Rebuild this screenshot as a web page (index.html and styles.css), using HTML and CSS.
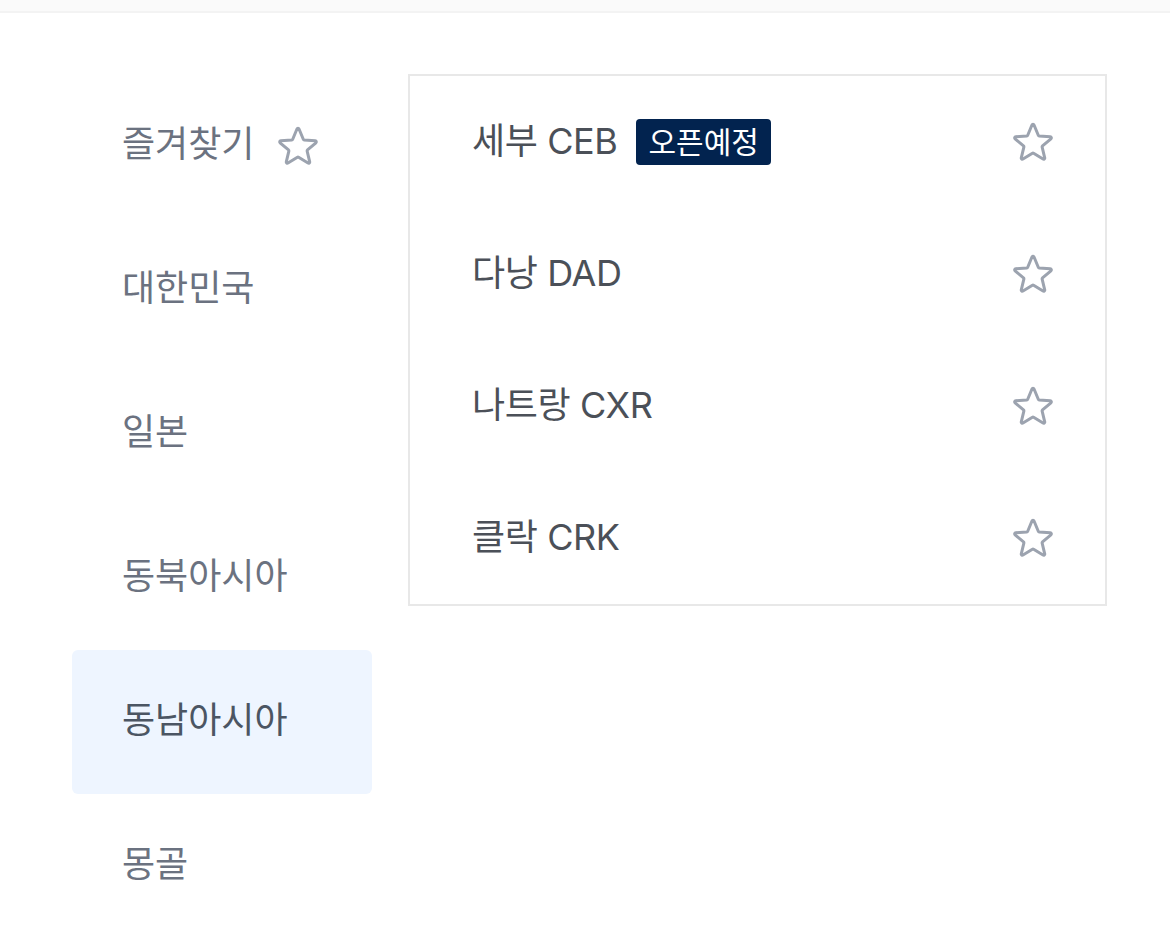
FILE: index.html
```html
<!DOCTYPE html>
<html lang="ko">
<head>
<meta charset="utf-8">
<link rel="stylesheet" href="styles.css">
</head>
<body>
<div class="topbar"></div>
<div class="content">
  <ul class="sidebar">
    <li class="side-item">즐겨찾기
      <svg class="star side-star" viewBox="0 0 24 24"><path d="M11.48 3.499a.562.562 0 011.04 0l2.125 5.111a.563.563 0 00.475.345l5.518.442c.499.04.701.663.321.988l-4.204 3.602a.563.563 0 00-.182.557l1.285 5.385a.562.562 0 01-.84.61l-4.725-2.885a.563.563 0 00-.586 0L6.982 20.54a.562.562 0 01-.84-.61l1.285-5.386a.562.562 0 00-.182-.557l-4.204-3.602a.563.563 0 01.321-.988l5.518-.442a.563.563 0 00.475-.345L11.48 3.5z"/></svg>
    </li>
    <li class="side-item">대한민국</li>
    <li class="side-item">일본</li>
    <li class="side-item">동북아시아</li>
    <li class="side-item active">동남아시아</li>
    <li class="side-item">몽골</li>
  </ul>
  <ul class="panel">
    <li class="row"><span class="name">세부 CEB</span><span class="badge">오픈예정</span>
      <svg class="star row-star" viewBox="0 0 24 24"><path d="M11.48 3.499a.562.562 0 011.04 0l2.125 5.111a.563.563 0 00.475.345l5.518.442c.499.04.701.663.321.988l-4.204 3.602a.563.563 0 00-.182.557l1.285 5.385a.562.562 0 01-.84.61l-4.725-2.885a.563.563 0 00-.586 0L6.982 20.54a.562.562 0 01-.84-.61l1.285-5.386a.562.562 0 00-.182-.557l-4.204-3.602a.563.563 0 01.321-.988l5.518-.442a.563.563 0 00.475-.345L11.48 3.5z"/></svg></li>
    <li class="row"><span class="name">다낭 DAD</span>
      <svg class="star row-star" viewBox="0 0 24 24"><path d="M11.48 3.499a.562.562 0 011.04 0l2.125 5.111a.563.563 0 00.475.345l5.518.442c.499.04.701.663.321.988l-4.204 3.602a.563.563 0 00-.182.557l1.285 5.385a.562.562 0 01-.84.61l-4.725-2.885a.563.563 0 00-.586 0L6.982 20.54a.562.562 0 01-.84-.61l1.285-5.386a.562.562 0 00-.182-.557l-4.204-3.602a.563.563 0 01.321-.988l5.518-.442a.563.563 0 00.475-.345L11.48 3.5z"/></svg></li>
    <li class="row"><span class="name">나트랑 CXR</span>
      <svg class="star row-star" viewBox="0 0 24 24"><path d="M11.48 3.499a.562.562 0 011.04 0l2.125 5.111a.563.563 0 00.475.345l5.518.442c.499.04.701.663.321.988l-4.204 3.602a.563.563 0 00-.182.557l1.285 5.385a.562.562 0 01-.84.61l-4.725-2.885a.563.563 0 00-.586 0L6.982 20.54a.562.562 0 01-.84-.61l1.285-5.386a.562.562 0 00-.182-.557l-4.204-3.602a.563.563 0 01.321-.988l5.518-.442a.563.563 0 00.475-.345L11.48 3.5z"/></svg></li>
    <li class="row"><span class="name">클락 CRK</span>
      <svg class="star row-star" viewBox="0 0 24 24"><path d="M11.48 3.499a.562.562 0 011.04 0l2.125 5.111a.563.563 0 00.475.345l5.518.442c.499.04.701.663.321.988l-4.204 3.602a.563.563 0 00-.182.557l1.285 5.385a.562.562 0 01-.84.61l-4.725-2.885a.563.563 0 00-.586 0L6.982 20.54a.562.562 0 01-.84-.61l1.285-5.386a.562.562 0 00-.182-.557l-4.204-3.602a.563.563 0 01.321-.988l5.518-.442a.563.563 0 00.475-.345L11.48 3.5z"/></svg></li>
  </ul>
</div>
</body>
</html>
```
FILE: styles.css
```css
* { box-sizing: border-box; }
html, body { margin: 0; padding: 0; background: #fff; }
body {
  font-family: Inter, "Noto Sans CJK KR", sans-serif;
  width: 1170px;
  height: 932px;
  overflow: hidden;
}
.topbar {
  height: 13px;
  background: #fafafa;
  border-bottom: 2px solid #f3f3f3;
}
.content {
  display: flex;
  align-items: flex-start;
  gap: 36px;
  padding: 61px 0 0 72px;
}
.sidebar {
  list-style: none;
  margin: 0;
  padding: 0;
  width: 300px;
  flex: none;
}
.side-item {
  height: 144px;
  display: flex;
  align-items: center;
  padding: 0 0 4px 50px;
  font-size: 36px;
  line-height: 1;
  color: #6b7280;
  border-radius: 6px;
}
.side-item.active {
  background: #eef5ff;
  color: #4b5563;
}
.star {
  width: 48px;
  height: 48px;
  fill: none;
  stroke: #9ca3af;
  stroke-width: 1.5;
  stroke-linejoin: round;
  flex: none;
}
.side-star { margin: 4px 0 0 20px; }
.panel {
  list-style: none;
  margin: 0;
  padding: 0;
  width: 699px;
  border: 2px solid #e8e8e8;
  flex: none;
}
.row {
  height: 132px;
  display: flex;
  align-items: center;
  padding: 0 48px 0 62px;
  font-size: 36px;
  line-height: 1;
  color: #4b5058;
}
.name { letter-spacing: -0.4px; padding-bottom: 2px; }
.badge {
  margin-left: 19px;
  height: 46px;
  padding: 0 12px;
  display: inline-flex;
  align-items: center;
  background: #02234f;
  color: #fff;
  font-size: 30px;
  border-radius: 4px;
}
.row-star { margin-left: auto; }
```
